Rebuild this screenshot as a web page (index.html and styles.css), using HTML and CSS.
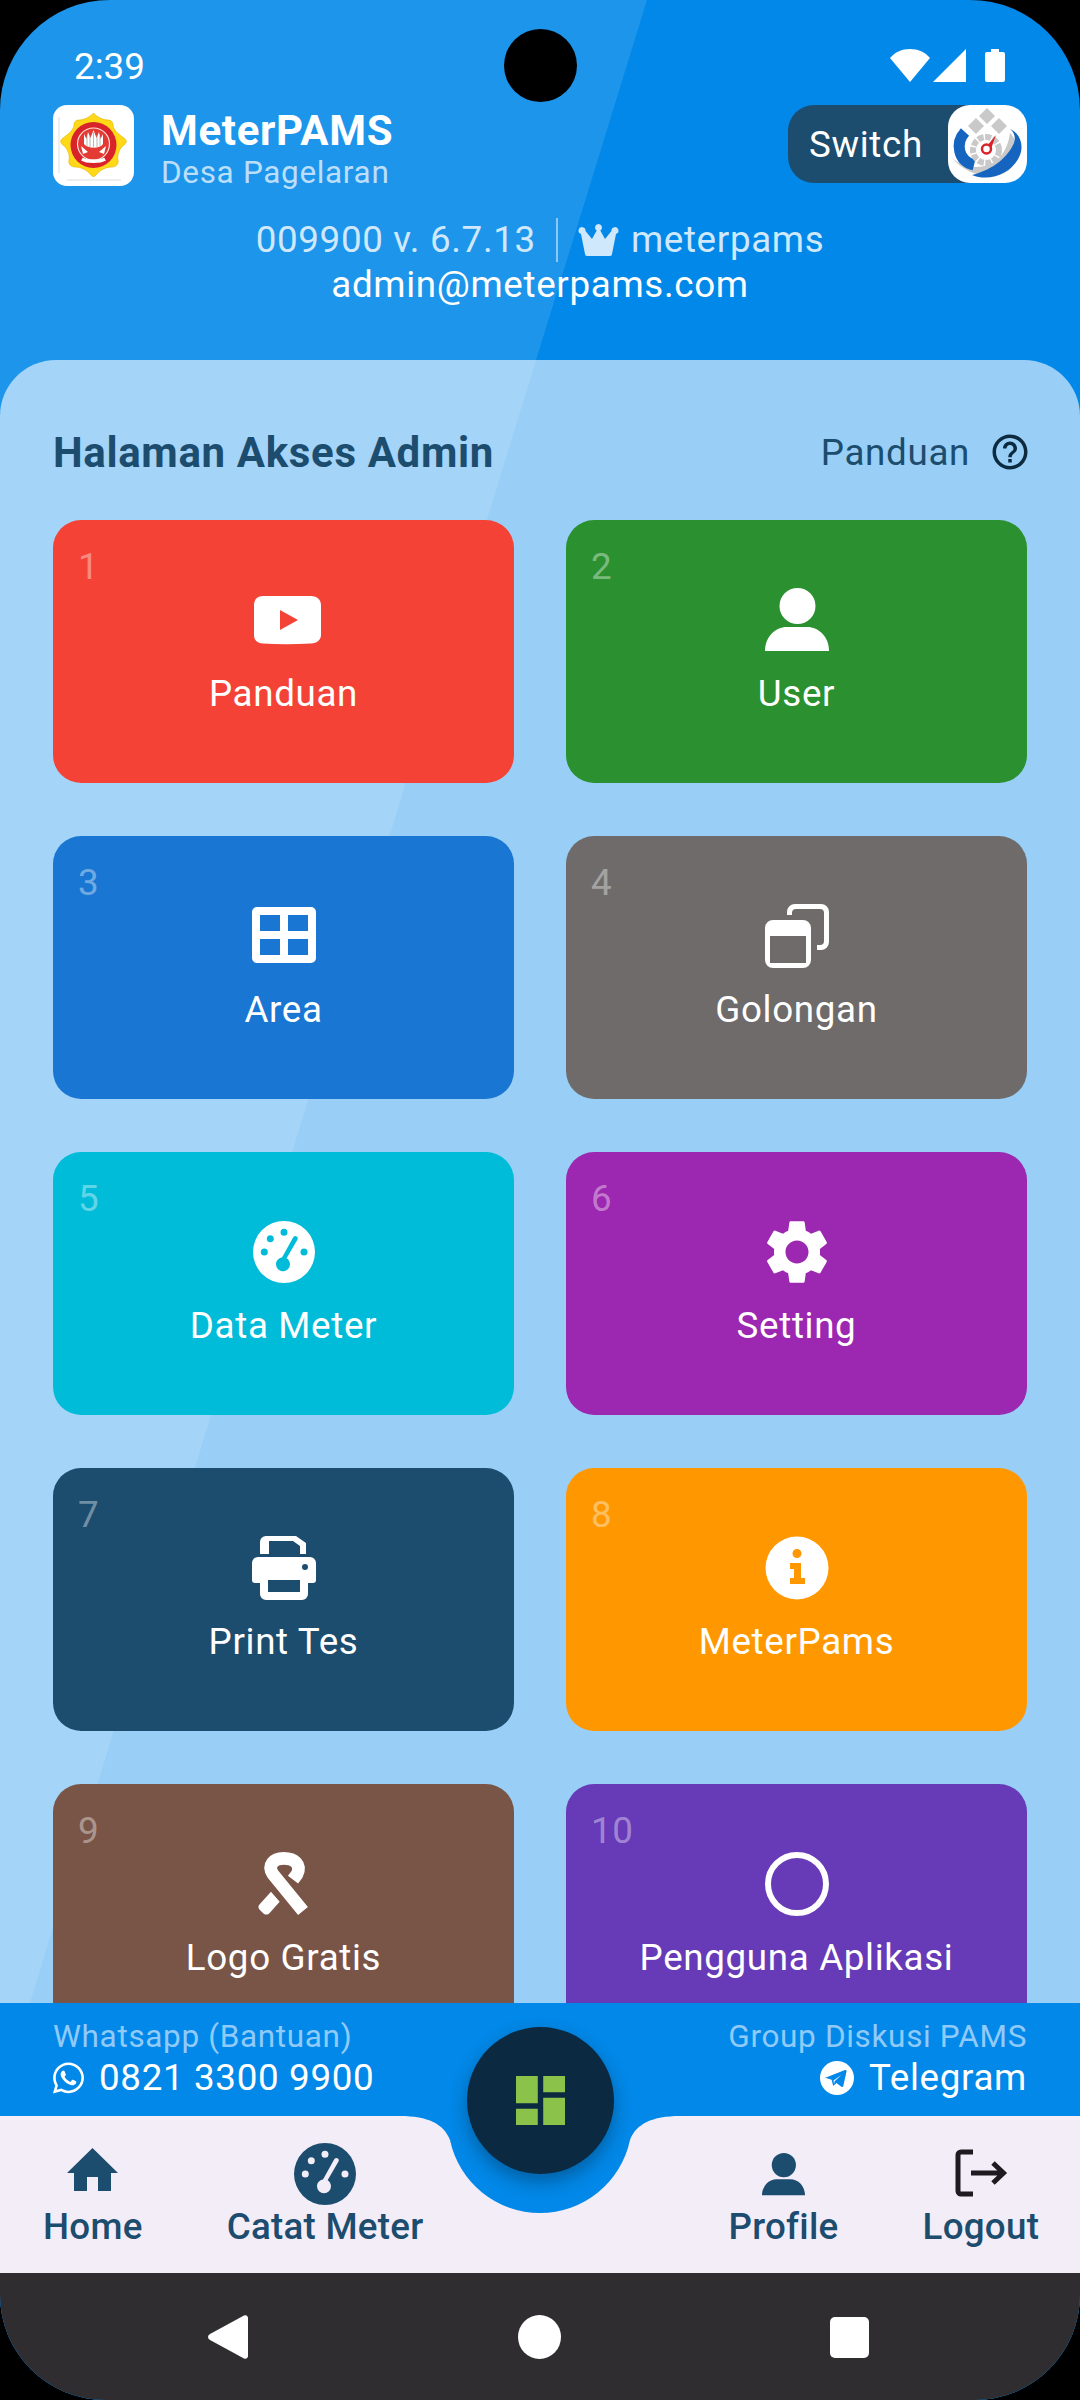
FILE: index.html
```html
<!DOCTYPE html>
<html>
<head>
  <meta charset="utf-8">
  <title>MeterPAMS</title>
  <link rel="stylesheet" href="styles.css">
</head>
<body>
  <svg class="defs" width="0" height="0">
    <symbol id="gauge" viewBox="0 0 64 64">
      <path fill="currentColor" fill-rule="evenodd" d="M32 1a31 31 0 1 0 0 62a31 31 0 1 0 0-62z
        M14.8 18.7a3.5 3.5 0 1 0 7 0a3.5 3.5 0 1 0-7 0z
        M28.5 12.3a3.5 3.5 0 1 0 7 0a3.5 3.5 0 1 0-7 0z
        M8.8 32a3.5 3.5 0 1 0 7 0a3.5 3.5 0 1 0-7 0z
        M48.5 32a3.5 3.5 0 1 0 7 0a3.5 3.5 0 1 0-7 0z
        M24 44.3a7 7 0 1 0 14 0c0-2.6-1.4-4.8-3.4-6L45.5 19.5a2.4 2.4 0 0 0-4.4-2L30 37.4c-3.4.4-6 3.3-6 6.9z"/>
    </symbol>
    <symbol id="person" viewBox="0 0 64 64">
      <circle cx="32.5" cy="18" r="18" fill="currentColor"/>
      <path fill="currentColor" d="M0 63C0 49 10 39 22 39H42C54 39 64 49 64 63Z"/>
    </symbol>
  </svg>

  <div class="screen">
    <div class="shine"></div>
    <div class="camera"></div>

    <header class="top">
      <div class="statusbar">
        <span class="clock">2:39</span>
        <div class="status-icons">
          <svg width="40" height="33" viewBox="0 0 40 33"><path fill="#fff" d="M20 33L0 9C5 3 12 0 20 0s15 3 20 9z"/></svg>
          <svg width="33" height="33" viewBox="0 0 33 33"><path fill="#fff" d="M33 0V33H0z"/></svg>
          <svg class="battery" width="20" height="33" viewBox="0 0 20 33"><path fill="#fff" d="M6 0h8v3h4a2 2 0 0 1 2 2V31a2 2 0 0 1-2 2H2a2 2 0 0 1-2-2V5a2 2 0 0 1 2-2h4z"/></svg>
        </div>
      </div>

      <div class="brand-row">
        <div class="brand">
          <div class="seal">
            <svg width="81" height="81" viewBox="0 0 81 81">
              <path fill="none" stroke="#ddd" d="M6 12V68M14 75H68"/>
              <path fill="#ffd817" stroke="#e0b400" stroke-width="0.6" d="M40.500 8C44 12 50 15 55 15 58 15 60 17 60 20 60 24 65 29 71 33 74 35 74 38 71 40 66 44 64 50 65 55 66 59 63 62 59 62 53 62 47 65 43 70 41.500 72 39.500 72 38 70 34 65 28 62 22 62 18 62 15 59 16 55 17 50 15 44 10 40 7 38 7 35 10 33 16 29 21 24 21 20 21 17 23 15 26 15 31 15 37 12 40.500 8Z"/>
              <circle cx="40.500" cy="40" r="23" fill="#d9232a"/>
              <circle cx="40.500" cy="39" r="16" fill="#e33a34" stroke="#fbe3d8" stroke-width="1.200"/>
              <path fill="#fff" d="M31 29l2.500 5 1.500-7 2.500 6 3-8 3 8 2.500-6 1.500 7 2.500-5v10c-3 5-15 5-19 0z"/>
              <path fill="none" stroke="#9a9a9a" stroke-width="0.700" d="M34 31V41M37 30V42M40.500 27V42.500M44 30V42M47 31V41"/>
              <path fill="#fff" d="M28 41l7 6-5 2zM53 41l-7 6 5 2z"/>
              <path fill="none" stroke="#fff" stroke-width="3.500" d="M29 54c5 3 18 3 23 0"/>
            </svg>
          </div>
          <div class="brand-text">
            <div class="brand-name">MeterPAMS</div>
            <div class="brand-sub">Desa Pagelaran</div>
          </div>
        </div>
        <div class="switch">
          <span class="switch-label">Switch</span>
          <div class="switch-logo">
            <svg width="79" height="78" viewBox="0 0 79 78">
              <path fill="#c9c9c9" d="M39 3l8 8-8 8-8-8zM28 13l8 8-8 8-8-8zM51 13l8 8-8 8-8-8z"/>
              <path fill="#c9c9c9" d="M3 52C14 62 28 64 40 60 52 56 60 44 62 28 72 38 72 56 60 66 46 76 20 72 3 52Z"/>
              <path fill="none" stroke="#1565c0" stroke-width="11" d="M17 27C7 38 10 56 26 60"/>
              <path fill="#1565c0" d="M24 70C40 66 58 56 66 38 68 32 66 27 62 24 72 28 76 40 72 50 66 66 44 78 24 70Z"/>
              <circle cx="38" cy="45" r="13" fill="none" stroke="#c9c9c9" stroke-width="6" stroke-dasharray="6 1.500"/>
              <path fill="#d9232a" d="M48 30l-5 14-4-3z"/>
              <circle cx="38.500" cy="44" r="4.500" fill="#fff" stroke="#d9232a" stroke-width="2.500"/>
            </svg>
          </div>
        </div>
      </div>

      <div class="account">
        <div class="account-line">
          <span>009900 v. 6.7.13</span>
          <span class="divider"></span>
          <svg class="crown" width="43" height="32" viewBox="0 0 41 32"><path fill="#cfe8fb" d="M20.500 0a3.500 3.500 0 0 1 1.800 6.500L27 15l6.500-8a3.500 3.500 0 1 1 4.500 3L34 30a2 2 0 0 1-2 2H9a2 2 0 0 1-2-2L3 10a3.500 3.500 0 1 1 4.500-3L14 15l4.700-8.500A3.500 3.500 0 0 1 20.500 0z"/></svg>
          <span>meterpams</span>
        </div>
        <div class="account-mail">admin@meterpams.com</div>
      </div>
    </header>

    <main class="panel">
      <div class="panel-head">
        <h1 class="panel-title">Halaman Akses Admin</h1>
        <div class="guide">
          <span>Panduan</span>
          <svg width="42" height="42" viewBox="0 0 24 24"><path fill="#0c2a40" d="M11 18h2v-2h-2v2zm1-16C6.480 2 2 6.480 2 12s4.480 10 10 10 10-4.480 10-10S17.520 2 12 2zm0 18c-4.410 0-8-3.590-8-8s3.590-8 8-8 8 3.590 8 8-3.590 8-8 8zm0-14c-2.210 0-4 1.790-4 4h2c0-1.100.900-2 2-2s2 .900 2 2c0 2-3 1.750-3 5h2c0-2.250 3-2.500 3-5 0-2.210-1.790-4-4-4z"/></svg>
        </div>
      </div>

      <div class="menu">
        <a class="card red">
          <span class="num">1</span>
          <svg class="card-icon" viewBox="0 0 64 64"><path fill="#fff" fill-rule="evenodd" d="M11 8H59C64 8 69 11 69 17V47C69 52 65 55 59 55.500 42 56.500 26 56.500 11 55.500 5 55 2 52 2 47V17C2 11 6 8 11 8zM28 22V42L46 32z"/></svg>
          <span class="label">Panduan</span>
        </a>
        <a class="card green">
          <span class="num">2</span>
          <svg class="card-icon"><use href="#person"/></svg>
          <span class="label">User</span>
        </a>
        <a class="card blue">
          <span class="num">3</span>
          <svg class="card-icon" viewBox="0 0 64 64"><path fill="#fff" fill-rule="evenodd" d="M5 3H59a5 5 0 0 1 5 5V54a5 5 0 0 1-5 5H5a5 5 0 0 1-5-5V8a5 5 0 0 1 5-5zM8 11V27H28V11zM36 11V27H56V11zM8 35V51H28V35zM36 35V51H56V35z"/></svg>
          <span class="label">Area</span>
        </a>
        <a class="card grey">
          <span class="num">4</span>
          <svg class="card-icon" viewBox="0 0 64 64"><path fill="#fff" fill-rule="evenodd" d="M8 16H38a8 8 0 0 1 8 8V56a8 8 0 0 1-8 8H8a8 8 0 0 1-8-8V24a8 8 0 0 1 8-8zM5 32V59H41V32zM22 11V8a8 8 0 0 1 8-8H56a8 8 0 0 1 8 8V38a8 8 0 0 1-8 8H52V41H55a4 4 0 0 0 4-4V9a4 4 0 0 0-4-4H31a4 4 0 0 0-4 4V11z"/></svg>
          <span class="label">Golongan</span>
        </a>
        <a class="card cyan">
          <span class="num">5</span>
          <svg class="card-icon"><use href="#gauge"/></svg>
          <span class="label">Data Meter</span>
        </a>
        <a class="card purple">
          <span class="num">6</span>
          <svg class="card-icon" viewBox="2 2 20 20"><path fill="#fff" d="M19.140 12.940c.04-.3.06-.61.06-.94 0-.32-.02-.64-.07-.94l2.030-1.580c.18-.14.23-.41.12-.61l-1.920-3.320c-.12-.22-.37-.29-.59-.22l-2.390.96c-.5-.38-1.030-.7-1.620-.94l-.36-2.540c-.04-.24-.24-.41-.48-.41h-3.840c-.24 0-.43.17-.47.41l-.36 2.540c-.59.24-1.130.57-1.620.94l-2.390-.96c-.22-.08-.47 0-.59.22L2.740 8.870c-.12.21-.08.47.12.61l2.030 1.580c-.05.3-.09.63-.09.94s.02.64.07.94l-2.030 1.580c-.18.14-.23.41-.12.61l1.920 3.320c.12.22.37.29.59.22l2.390-.96c.5.38 1.030.7 1.620.94l.36 2.540c.05.24.24.41.48.41h3.840c.24 0 .44-.17.47-.41l.36-2.540c.59-.24 1.130-.56 1.620-.94l2.390.96c.22.08.47 0 .59-.22l1.920-3.320c.12-.22.07-.47-.12-.61l-2.010-1.580zM12 15.600c-1.980 0-3.600-1.620-3.600-3.600s1.620-3.600 3.600-3.600 3.600 1.620 3.600 3.600-1.620 3.600-3.600 3.600z"/></svg>
          <span class="label">Setting</span>
        </a>
        <a class="card navy">
          <span class="num">7</span>
          <svg class="card-icon" viewBox="0 0 64 64"><path fill="#fff" fill-rule="evenodd" d="M14 0H44L54 7V18H48V10L41 5H17V18H8V6a6 6 0 0 1 6-6zM6 21H58a6 6 0 0 1 6 6V44a3 3 0 0 1-3 3H56V58a6 6 0 0 1-6 6H14a6 6 0 0 1-6-6V47H3a3 3 0 0 1-3-3V27a6 6 0 0 1 6-6zM16 44V56H48V44zM53 28a3 3 0 1 0 0 6a3 3 0 1 0 0-6z"/></svg>
          <span class="label">Print Tes</span>
        </a>
        <a class="card orange">
          <span class="num">8</span>
          <svg class="card-icon" viewBox="0 0 64 64"><path fill="#fff" fill-rule="evenodd" d="M32 0.500a31.500 31.500 0 1 0 0 63a31.500 31.500 0 1 0 0-63zM32 13a4.500 4.500 0 1 1 0 9a4.500 4.500 0 1 1 0-9zM25 27H36V42H40V48H25V42H29V33H25z"/></svg>
          <span class="label">MeterPams</span>
        </a>
        <a class="card brown">
          <span class="num">9</span>
          <svg class="card-icon" viewBox="65 33 192 192">
            <path fill="none" stroke="#fff" stroke-width="38" stroke-linejoin="round" d="M218 210L128 100C110 72 130 52 160 52C192 52 214 70 200 100L188 116"/>
            <path fill="#fff" d="M122 152L148 182 118 216C112 222 104 222 98 216L88 206C83 201 83 195 88 190z"/>
          </svg>
          <span class="label">Logo Gratis</span>
        </a>
        <a class="card violet">
          <span class="num">10</span>
          <svg class="card-icon" viewBox="0 0 64 64"><circle cx="32" cy="32" r="29" fill="none" stroke="#fff" stroke-width="6"/></svg>
          <span class="label">Pengguna Aplikasi</span>
        </a>
      </div>
    </main>

    <footer class="bottom">
      <div class="contacts">
        <div class="contact">
          <div class="contact-title">Whatsapp (Bantuan)</div>
          <div class="contact-value">
            <svg width="31" height="36" viewBox="0 0 448 512"><path fill="#fff" d="M380.900 97.100C339 55.100 283.200 32 223.900 32c-122.400 0-222 99.600-222 222 0 39.100 10.200 77.300 29.600 111L0 480l117.700-30.900c32.400 17.700 68.900 27 106.100 27h.1c122.300 0 224.100-99.600 224.100-222 0-59.300-25.200-115-67.100-157zm-157 341.600c-33.200 0-65.700-8.900-94-25.700l-6.700-4-69.800 18.300L72 359.200l-4.400-7c-18.500-29.400-28.200-63.300-28.200-98.200 0-101.700 82.800-184.500 184.600-184.500 49.300 0 95.600 19.200 130.400 54.100 34.800 34.900 56.200 81.200 56.100 130.500 0 101.800-84.900 184.600-186.600 184.600zm101.200-138.200c-5.500-2.800-32.800-16.200-37.900-18-5.100-1.900-8.800-2.800-12.500 2.800-3.700 5.600-14.300 18-17.600 21.800-3.200 3.700-6.500 4.200-12 1.400-32.600-16.300-54-29.100-75.500-66-5.700-9.800 5.700-9.100 16.300-30.300 1.800-3.700.9-6.900-.5-9.700-1.400-2.800-12.500-30.100-17.100-41.200-4.500-10.800-9.100-9.300-12.500-9.500-3.200-.2-6.900-.2-10.600-.2-3.700 0-9.700 1.400-14.800 6.900-5.100 5.600-19.400 19-19.400 46.300 0 27.300 19.900 53.700 22.600 57.400 2.800 3.700 39.100 59.700 94.800 83.800 35.200 15.200 49 16.500 66.600 13.900 10.700-1.600 32.800-13.400 37.400-26.400 4.600-13 4.600-24.100 3.200-26.400-1.300-2.500-5-3.900-10.500-6.600z"/></svg>
            <span>0821 3300 9900</span>
          </div>
        </div>
        <div class="contact contact-right">
          <div class="contact-title">Group Diskusi PAMS</div>
          <div class="contact-value">
            <svg width="34" height="34" viewBox="0 0 34 34"><circle cx="17" cy="17" r="17" fill="#fff"/><path fill="#0288e8" d="M6 16.500L25 9c1-.4 1.800.2 1.500 1.500L23.300 25c-.2 1-1 1.300-1.900.7l-5-3.700-2.400 2.300c-.4.400-.8.500-1 0l-1.400-5.600-5.500-1.700c-.9-.3-.9-.8-.1-1.200zM13.500 19.500l.6 3.500.5-2.700 7-6.600z"/></svg>
            <span>Telegram</span>
          </div>
        </div>
      </div>

      <nav class="nav">
        <svg class="nav-shape" width="1080" height="157" viewBox="0 0 1080 157"><path fill="#f3edf8" d="M0 0H400C428 0 444 8 450 24A92 92 0 0 0 630 24C636 8 652 0 680 0H1080V157H0Z"/></svg>
        <a class="nav-item">
          <span class="nav-icon"><svg width="64" height="64" viewBox="0 0 64 64"><path fill="#1c4c6e" d="M31.500 6L57 31H50V49H37V35H26V49H13V31H6Z"/></svg></span>
          Home
        </a>
        <a class="nav-item">
          <span class="nav-icon"><svg class="nav-gauge" width="64" height="64"><use href="#gauge"/></svg></span>
          Catat Meter
        </a>
        <span class="nav-gap"></span>
        <a class="nav-item">
          <span class="nav-icon"><svg class="nav-person" width="43" height="43"><use href="#person"/></svg></span>
          Profile
        </a>
        <a class="nav-item">
          <span class="nav-icon"><svg width="64" height="64" viewBox="0 0 64 64"><path fill="none" stroke="#1d1b20" stroke-width="5" d="M24 10H12a3 3 0 0 0-3 3V49a3 3 0 0 0 3 3H24M22 31H54M44 21L54.500 31 44 41"/></svg></span>
          Logout
        </a>
      </nav>

      <button class="fab">
        <svg width="49" height="49" viewBox="3 3 18 18"><path fill="#8bc34a" d="M3 13h8V3H3v10zm0 8h8v-6H3v6zm10 0h8V11h-8v10zm0-18v6h8V3h-8z"/></svg>
      </button>

      <div class="sysbar">
        <svg width="40" height="44" viewBox="0 0 40 44"><path fill="#fff" d="M36 0.500c2-.8 4 .5 4 2.500V41c0 2-2 3.300-4 2.500L2 25c-2.600-1.500-2.600-4.500 0-6z"/></svg>
        <span class="sys-home"></span>
        <span class="sys-square"></span>
      </div>
    </footer>
  </div>
</body>
</html>
```

FILE: styles.css
```css
* {
  box-sizing: border-box;
}

html, body {
  margin: 0;
  padding: 0;
  background-color: #000;
}

body {
  font-family: Roboto, "Noto Sans", sans-serif;
  letter-spacing: 0.66px;
}

.defs {
  position: absolute;
}

.screen {
  position: relative;
  width: 1080px;
  height: 2400px;
  display: flex;
  flex-direction: column;
  overflow: hidden;
  background-color: #0288e8;
  border-radius: 110px 110px 105px 105px;
}

/* diagonal light band behind everything */
.shine {
  position: absolute;
  top: 0;
  left: 0;
  width: 647px;
  height: 2100px;
  background-color: rgba(255, 255, 255, 0.11);
  clip-path: polygon(0 0, 100% 0, 0 100%);
}

.camera {
  position: absolute;
  top: 29px;
  left: 504px;
  width: 73px;
  height: 73px;
  border-radius: 50%;
  background-color: #000;
}

.top {
  position: relative;
  height: 360px;
  flex: none;
  color: #fff;
}

.statusbar {
  height: 105px;
  padding: 46px 75px 0 74px;
  display: flex;
  justify-content: space-between;
  align-items: flex-start;
}

.clock {
  margin-top: 1px;
  font-size: 36.75px;
  line-height: 40px;
  letter-spacing: 0;
}

.status-icons {
  display: flex;
  gap: 3px;
  margin-top: 3px;
}

.battery {
  margin-left: 16px;
}

.brand-row {
  height: 81px;
  padding: 0 53px;
  display: flex;
  justify-content: space-between;
  align-items: flex-start;
}

.brand {
  display: flex;
  gap: 27px;
}

.seal {
  width: 81px;
  height: 81px;
  border-radius: 14px;
  background-color: #fff;
  overflow: hidden;
}

.brand-name {
  margin-top: 3px;
  font-size: 42px;
  line-height: 46px;
  font-weight: 700;
}

.brand-sub {
  font-size: 31.5px;
  line-height: 38px;
  color: #bbdefb;
}

.switch {
  width: 239px;
  height: 78px;
  display: flex;
  justify-content: space-between;
  align-items: center;
  padding-left: 21px;
  border-radius: 26px;
  background-color: #1c4c6e;
}

.switch-label {
  font-size: 36.75px;
}

.switch-logo {
  width: 79px;
  height: 78px;
  border-radius: 22px;
  background-color: #fff;
  overflow: hidden;
}

.account {
  margin-top: 31px;
  font-size: 36.75px;
  line-height: 45px;
  text-align: center;
}

.account-line {
  display: flex;
  justify-content: center;
  align-items: center;
  color: #cfe8fb;
}

.divider {
  width: 2px;
  height: 44px;
  margin: 0 19px 0 20px;
  background-color: #8cc8f5;
}

.crown {
  margin-right: 11px;
}

.panel {
  position: relative;
  flex: 1;
  min-height: 0;
  overflow: hidden;
  padding: 70px 53px 0;
  border-radius: 56px 56px 0 0;
  background-color: rgba(255, 255, 255, 0.6);
}

.panel-head {
  height: 44px;
  margin-bottom: 46px;
  display: flex;
  justify-content: space-between;
  align-items: center;
}

.panel-title {
  margin: 0;
  font-size: 42px;
  font-weight: 700;
  color: #1c4c6e;
}

.guide {
  display: flex;
  align-items: center;
  gap: 19px;
  margin-right: -4px;
  font-size: 36.75px;
  color: #1c4c6e;
}

.menu {
  display: grid;
  grid-template-columns: 461px 461px;
  grid-auto-rows: 263px;
  gap: 53px 52px;
}

.card {
  position: relative;
  display: flex;
  flex-direction: column;
  align-items: center;
  padding-top: 68px;
  border-radius: 28px;
  color: #fff;
}

.num {
  position: absolute;
  top: 26px;
  left: 25px;
  font-size: 36.75px;
  line-height: 42px;
  color: rgba(255, 255, 255, 0.4);
}

.card-icon {
  width: 64px;
  height: 64px;
  overflow: visible;
}

.label {
  margin-top: 20px;
  font-size: 36.75px;
  line-height: 44px;
}

.red { background-color: #f44336; }
.green { background-color: #2b9030; }
.blue { background-color: #1976d2; }
.grey { background-color: #6e6b6a; }
.cyan { background-color: #00bcd8; }
.purple { background-color: #9c27b0; }
.navy { background-color: #1c4c6e; }
.orange { background-color: #ff9800; }
.brown { background-color: #795548; }
.violet { background-color: #673ab7; }

.bottom {
  position: relative;
  flex: none;
  height: 397px;
  background-color: #0288e8;
}

.contacts {
  height: 113px;
  padding: 15px 53px 0;
  display: flex;
  justify-content: space-between;
}

.contact-title {
  font-size: 31.5px;
  line-height: 38px;
  color: #90caf9;
}

.contact-value {
  display: flex;
  align-items: center;
  gap: 15px;
  font-size: 36.75px;
  line-height: 44px;
  color: #fff;
}

.contact-right {
  text-align: right;
}

.contact-right .contact-value {
  justify-content: flex-end;
}

.nav {
  position: relative;
  height: 157px;
  padding: 26px 0 0 43px;
  display: flex;
  gap: 84px;
}

.nav-shape {
  position: absolute;
  top: 0;
  left: 0;
}

.nav-item {
  position: relative;
  display: flex;
  flex-direction: column;
  align-items: center;
  font-size: 36.75px;
  font-weight: 500;
  line-height: 42px;
  letter-spacing: 0.26px;
  color: #1c4c6e;
}

.nav-icon {
  height: 64px;
  display: flex;
  align-items: center;
  justify-content: center;
}

.nav-gauge, .nav-person {
  color: #1c4c6e;
}

.nav-gap {
  width: 137px;
}

.fab {
  position: absolute;
  top: 24px;
  left: 467px;
  width: 147px;
  height: 147px;
  padding: 0;
  display: flex;
  align-items: center;
  justify-content: center;
  border: none;
  border-radius: 50%;
  background-color: #0b2a42;
  box-shadow: 0 8px 18px rgba(0, 0, 0, 0.3);
}

.sysbar {
  height: 127px;
  padding: 42px 211px 0 208px;
  display: flex;
  justify-content: space-between;
  align-items: flex-start;
  background-color: #2f2d30;
}

.sys-home {
  width: 43px;
  height: 44px;
  border-radius: 50%;
  background-color: #fff;
}

.sys-square {
  width: 39px;
  height: 41px;
  margin-top: 2px;
  border-radius: 5px;
  background-color: #fff;
}

.card-icon use {
  color: #fff;
}
```
